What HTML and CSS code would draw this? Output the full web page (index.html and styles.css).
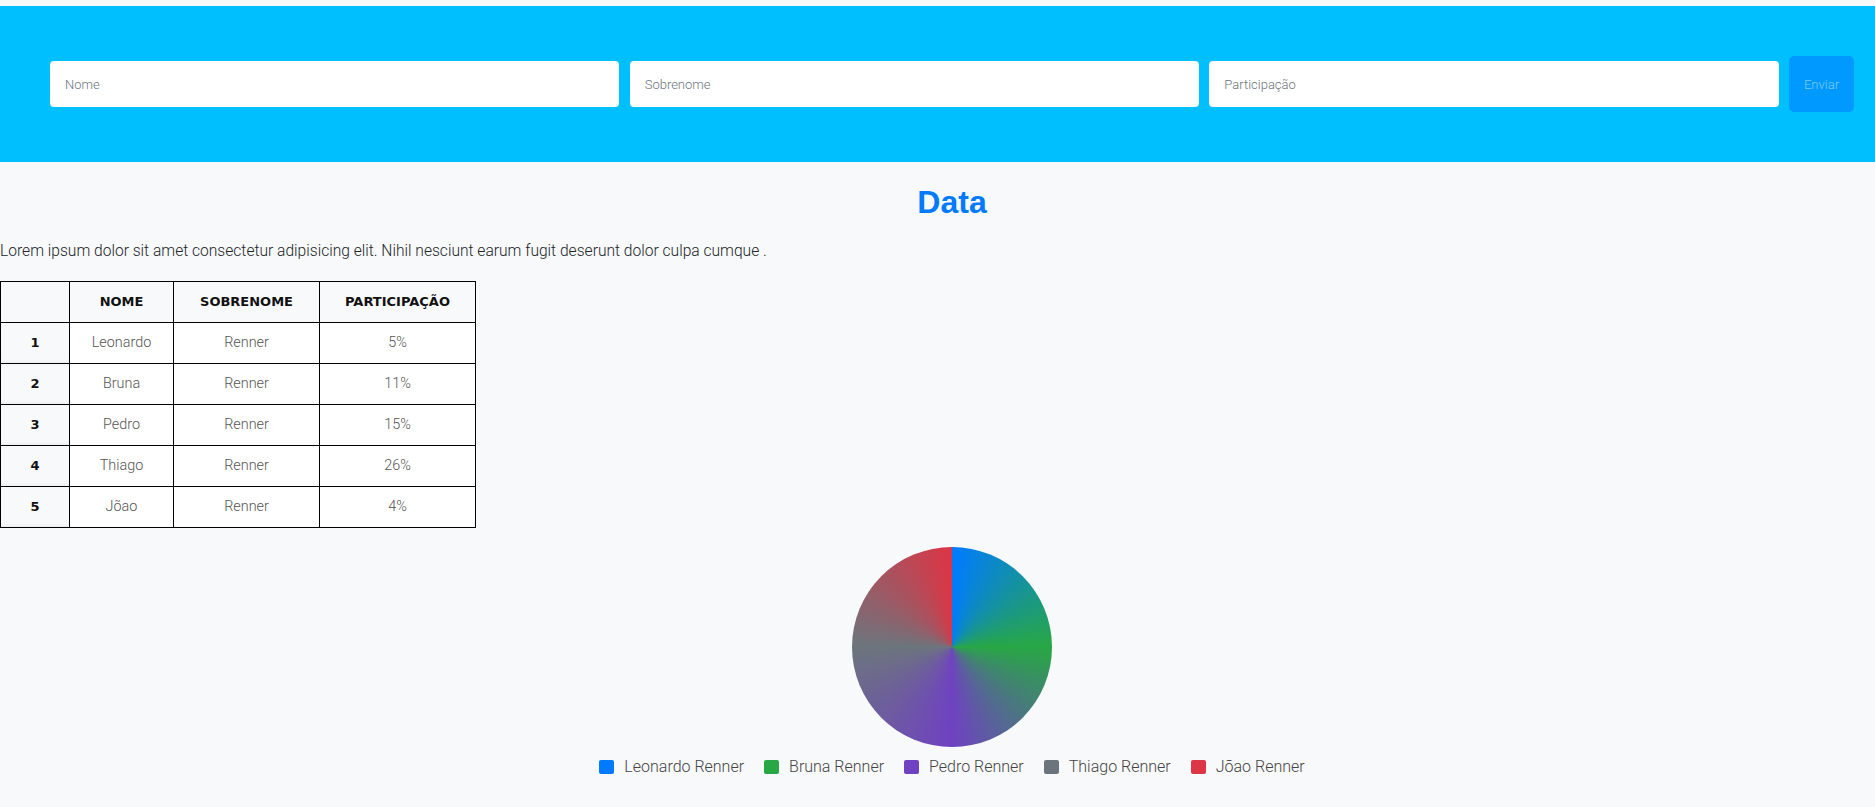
FILE: index.html
```html
<!DOCTYPE html>
<html lang="pt">
<head>
<meta charset="utf-8">
<title>Data</title>
<link rel="stylesheet" href="styles.css">
</head>
<body>
<header class="topbar">
  <form class="entry-form">
    <input class="field" type="text" placeholder="Nome">
    <input class="field" type="text" placeholder="Sobrenome">
    <input class="field" type="text" placeholder="Participação">
    <button class="send" type="button">Enviar</button>
  </form>
</header>
<main class="content">
  <h1 class="title">Data</h1>
  <p class="intro">Lorem ipsum dolor sit amet consectetur adipisicing elit. Nihil nesciunt earum fugit deserunt dolor culpa cumque .</p>
  <table class="data-table">
    <thead>
      <tr>
        <th class="c-idx"></th>
        <th class="c-name">Nome</th>
        <th class="c-last">Sobrenome</th>
        <th class="c-part">Participação</th>
      </tr>
    </thead>
    <tbody>
      <tr><th class="c-idx">1</th><td>Leonardo</td><td>Renner</td><td>5%</td></tr>
      <tr><th class="c-idx">2</th><td>Bruna</td><td>Renner</td><td>11%</td></tr>
      <tr><th class="c-idx">3</th><td>Pedro</td><td>Renner</td><td>15%</td></tr>
      <tr><th class="c-idx">4</th><td>Thiago</td><td>Renner</td><td>26%</td></tr>
      <tr><th class="c-idx">5</th><td>Jõao</td><td>Renner</td><td>4%</td></tr>
    </tbody>
  </table>
  <section class="chart">
    <div class="pie"></div>
    <ul class="legend">
      <li class="legend-item"><span class="swatch sw-blue"></span>Leonardo Renner</li>
      <li class="legend-item"><span class="swatch sw-green"></span>Bruna Renner</li>
      <li class="legend-item"><span class="swatch sw-purple"></span>Pedro Renner</li>
      <li class="legend-item"><span class="swatch sw-gray"></span>Thiago Renner</li>
      <li class="legend-item"><span class="swatch sw-red"></span>Jõao Renner</li>
    </ul>
  </section>
</main>
</body>
</html>
```

FILE: styles.css
```css
html, body {
  margin: 0;
  padding: 0;
  background: #f8f9fa;
}

body {
  font-family: Roboto, "Liberation Sans", sans-serif;
  font-weight: 300;
  color: #212529;
  padding-top: 6px;
}

.topbar {
  height: 156px;
  background: #00bfff;
  display: flex;
  align-items: center;
  padding: 0 21px 0 50px;
  box-sizing: border-box;
}

.entry-form {
  display: flex;
  align-items: center;
  gap: 10.5px;
  width: 100%;
}

.field {
  flex: 1;
  min-width: 0;
  height: 46px;
  box-sizing: border-box;
  border: none;
  border-radius: 4px;
  background: #fff;
  padding: 0 15px;
  font-family: Roboto, "Liberation Sans", sans-serif;
  font-weight: 300;
  font-size: 13px;
  color: #495057;
  outline: none;
}

.field::placeholder {
  color: #6c757d;
  opacity: 1;
}

.send {
  width: 65px;
  height: 56px;
  flex: none;
  border: none;
  border-radius: 5px;
  background: #0099ff;
  color: #7ccdf8;
  font-family: Roboto, "Liberation Sans", sans-serif;
  font-weight: 300;
  font-size: 13px;
  padding: 0;
}

.content {
  display: flex;
  flex-direction: column;
}

.title {
  margin: 22px 0 21px 29px;
  text-align: center;
  font-family: "Liberation Sans", Arial, sans-serif;
  font-weight: 700;
  font-size: 32px;
  color: #007bff;
}

.intro {
  margin: 0;
  font-size: 15.6px;
  line-height: 18.75px;
  color: #212529;
}

.data-table {
  margin-top: 20px;
  border-collapse: collapse;
  width: 476px;
  background: #fff;
}

.data-table th,
.data-table td {
  border: 1px solid #000;
  height: 41px;
  padding: 0;
  box-sizing: border-box;
  text-align: center;
}

.data-table thead th {
  background: #f8f9fa;
  font-family: "DejaVu Sans", Verdana, sans-serif;
  font-weight: 700;
  font-size: 13px;
  text-transform: uppercase;
  color: #111;
}

.data-table tbody th {
  background: #f8f9fa;
  font-family: "DejaVu Sans", Verdana, sans-serif;
  font-weight: 700;
  font-size: 13px;
  color: #111;
  box-shadow: inset 0 -3px 4px -2px rgba(0, 0, 0, 0.06);
}

.data-table td {
  font-family: Roboto, "Liberation Sans", sans-serif;
  font-weight: 300;
  font-size: 14.4px;
  color: #555;
}

.c-idx { width: 69px; }
.c-name { width: 104px; }
.c-last { width: 146px; }
.c-part { width: 156px; }

.chart {
  margin: 19px 0 0 29px;
  display: flex;
  flex-direction: column;
  align-items: center;
}

.pie {
  width: 200px;
  height: 200px;
  border-radius: 50%;
  background: conic-gradient(#007bff, #28a745, #6f42c1, #6c757d, #dc3545);
}

.legend {
  list-style: none;
  margin: 10px 0 0;
  padding: 0;
  display: flex;
  gap: 20px;
}

.legend-item {
  display: flex;
  align-items: center;
  gap: 10px;
  font-size: 16px;
  color: #444;
  line-height: 20px;
}

.swatch {
  width: 15px;
  height: 14px;
  border-radius: 2px;
  display: inline-block;
}

.sw-blue { background: #007bff; }
.sw-green { background: #28a745; }
.sw-purple { background: #6f42c1; }
.sw-gray { background: #6c757d; }
.sw-red { background: #dc3545; }
```
